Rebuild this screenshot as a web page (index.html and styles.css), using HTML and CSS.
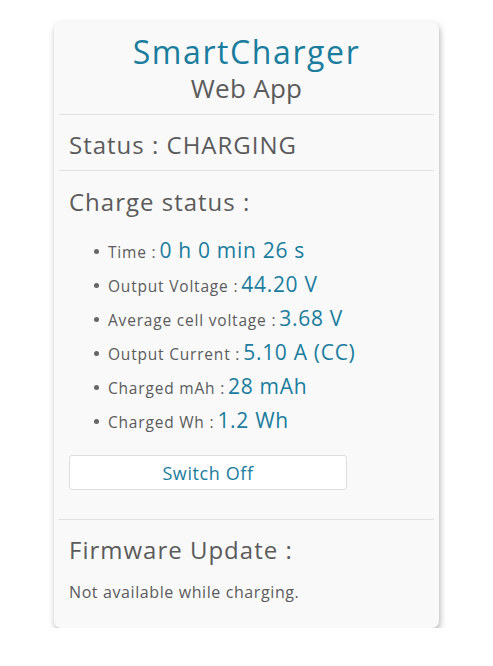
FILE: index.html
```html
<!DOCTYPE html>
<html>
<head>
<meta charset="utf-8">
<link rel="stylesheet" href="styles.css">
</head>
<body>
<div class="card">
  <header class="head">
    <h1 class="title">SmartCharger</h1>
    <div class="subtitle">Web App</div>
  </header>
  <section class="sec sec-status">
    <h2 class="h2">Status : CHARGING</h2>
  </section>
  <section class="sec sec-charge">
    <h2 class="h2">Charge status :</h2>
    <ul class="list">
      <li class="item"><span class="lbl">Time :</span><span class="val">0 h 0 min 26 s</span></li>
      <li class="item"><span class="lbl">Output Voltage :</span><span class="val">44.20 V</span></li>
      <li class="item"><span class="lbl">Average cell voltage :</span><span class="val">3.68 V</span></li>
      <li class="item"><span class="lbl">Output Current :</span><span class="val">5.10 A (CC)</span></li>
      <li class="item"><span class="lbl">Charged mAh :</span><span class="val">28 mAh</span></li>
      <li class="item"><span class="lbl">Charged Wh :</span><span class="val">1.2 Wh</span></li>
    </ul>
    <button class="btn">Switch Off</button>
  </section>
  <section class="sec sec-fw">
    <h2 class="h2">Firmware Update :</h2>
    <p class="note">Not available while charging.</p>
  </section>
</div>
</body>
</html>
```
FILE: styles.css
```css
html, body {
  margin: 0;
  padding: 0;
  background: #ffffff;
}
body {
  font-family: "Open Sans", "DejaVu Sans", sans-serif;
  color: #5b5b5b;
  padding-top: 22px;
}
.card {
  width: 385px;
  box-sizing: border-box;
  margin: 0 auto;
  background: #f9f9f9;
  border-radius: 7px;
  box-shadow: 1px 3px 6px rgba(0,0,0,0.3);
  padding: 12px 5px 26px;
}
.head {
  text-align: center;
  padding-bottom: 11px;
  border-bottom: 1px solid #e2e2e2;
}
.title {
  margin: 0;
  font-size: 32px;
  line-height: 36px;
  font-weight: 400;
  letter-spacing: 1.6px;
  color: #1a7d9d;
}
.subtitle {
  margin-top: 3px;
  font-size: 26px;
  line-height: 30px;
  letter-spacing: 0.3px;
  color: #5b5b5b;
}
.sec {
  padding: 0 10px;
}
.sec-status {
  padding-top: 15px;
  padding-bottom: 10px;
  border-bottom: 1px solid #e2e2e2;
}
.h2 {
  margin: 0;
  font-size: 24px;
  line-height: 30px;
  font-weight: 400;
  letter-spacing: 1px;
  color: #5b5b5b;
}
.sec-charge {
  padding-top: 16px;
  padding-bottom: 29px;
  border-bottom: 1px solid #e2e2e2;
}
.list {
  list-style: none;
  margin: 16px 0 0;
  padding: 0 0 0 25px;
}
.item {
  display: flex;
  align-items: baseline;
  height: 34px;
  line-height: 34px;
}
.item::before {
  content: "";
  width: 5px;
  height: 5px;
  border-radius: 50%;
  background: #666;
  margin-right: 9px;
  align-self: center;
  position: relative;
  top: 1px;
}
.lbl {
  font-size: 15.5px;
  letter-spacing: 0.8px;
  color: #5b5b5b;
  margin-right: 3px;
}
.val {
  font-size: 21px;
  letter-spacing: 0.7px;
  color: #1a7d9d;
}
.btn {
  display: block;
  margin-top: 18px;
  width: 278px;
  height: 35px;
  background: #ffffff;
  border: 1px solid #dedede;
  border-radius: 3px;
  font-family: inherit;
  font-size: 18px;
  letter-spacing: 0.6px;
  color: #1a7d9d;
  padding: 0;
}
.sec-fw {
  padding-top: 15px;
}
.note {
  margin: 17px 0 0;
  font-size: 16px;
  line-height: 20px;
  letter-spacing: 0.6px;
  color: #5b5b5b;
}
```
